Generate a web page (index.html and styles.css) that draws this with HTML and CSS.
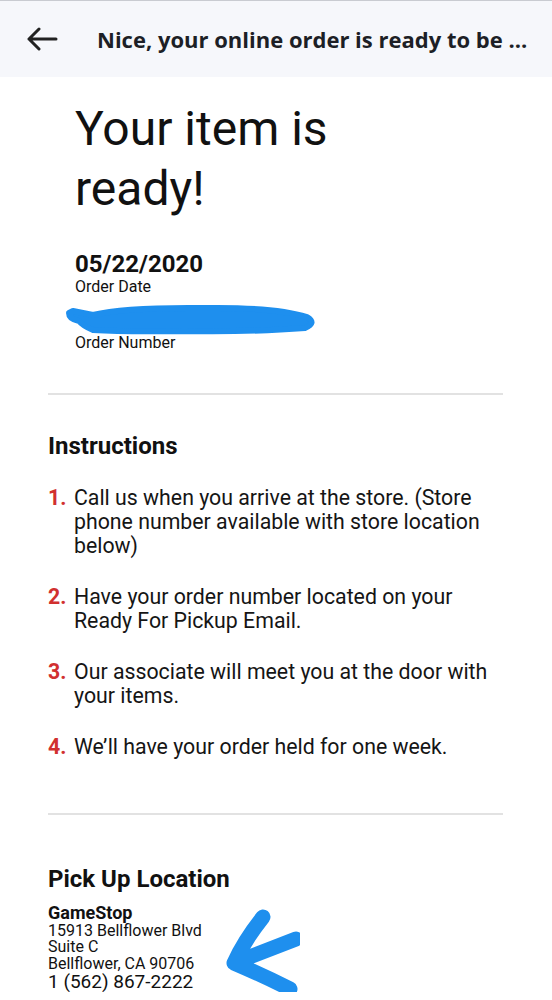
FILE: index.html
```html
<!DOCTYPE html>
<html lang="en">
<head>
    <meta charset="UTF-8">
    <meta name="viewport" content="width=device-width, initial-scale=1.0">
    <title>Your item is ready</title>
    <link rel="stylesheet" href="styles.css">
</head>
<body>

<header class="topbar">
    <button class="back" aria-label="Back">
        <svg width="32" height="24" viewBox="0 0 32 24">
            <path d="M30 12H3 M13 2L3 12L13 22" fill="none" stroke="#222" stroke-width="3" stroke-linecap="round" stroke-linejoin="round"/>
        </svg>
    </button>
    <div class="topbar-title">Nice, your online order is ready to be ...</div>
</header>

<main class="mail">
    <section class="hero">
        <h1>Your item is ready!</h1>
        <div class="order-date">05/22/2020</div>
        <div class="label">Order Date</div>
        <div class="order-number">
            <!-- redacted by hand -->
            <svg width="260" height="34" viewBox="0 0 260 34">
                <path d="M8 10 L28 14 Q60 6 140 7 Q210 6 242 16 Q252 22 240 27 Q190 31 120 30 Q60 31 28 29 Q18 25 14 20 Q4 18 4 12 Z" fill="#1e8fee" stroke="#1e8fee" stroke-width="6" stroke-linejoin="round"/>
            </svg>
        </div>
        <div class="label">Order Number</div>
    </section>

    <hr class="divider">

    <section class="block">
        <h2>Instructions</h2>
        <ol class="steps">
            <li><span class="num">1.</span><span>Call us when you arrive at the store. (Store phone number available with store location below)</span></li>
            <li><span class="num">2.</span><span>Have your order number located on your Ready For Pickup Email.</span></li>
            <li><span class="num">3.</span><span>Our associate will meet you at the door with your items.</span></li>
            <li><span class="num">4.</span><span>We’ll have your order held for one week.</span></li>
        </ol>
    </section>

    <hr class="divider">

    <section class="block location">
        <h2>Pick Up Location</h2>
        <address class="store">
            <strong>GameStop</strong><br>
            15913 Bellflower Blvd<br>
            Suite C<br>
            Bellflower, CA 90706
        </address>
        <div class="phone">1 (562) 867-2222</div>
        <svg class="scribble" width="90" height="100" viewBox="0 0 90 100">
            <path d="M53 14 Q34 38 24 60 L86 36 M24 60 Q52 72 80 86" fill="none" stroke="#1e8fee" stroke-width="15" stroke-linecap="round" stroke-linejoin="round"/>
        </svg>
    </section>
</main>

</body>
</html>
```

FILE: styles.css
```css
body {
    margin: 0;
    background: #fff;
    font-family: Roboto, "Liberation Sans", sans-serif;
    color: #111;
    overflow: hidden;
}
.topbar {
    display: flex;
    align-items: center;
    height: 76px;
    background: #f6f7fb;
    border-top: 1px solid #c9cbd1;
}
.back {
    background: none;
    border: none;
    padding: 0;
    margin: 0 39px 0 26px;
    width: 32px;
    height: 24px;
}
.topbar-title {
    font-family: "Open Sans", sans-serif;
    font-weight: 700;
    font-size: 22px;
    color: #1d1f26;
    white-space: nowrap;
}
.mail {
    padding: 0 49px 0 48px;
}
.hero {
    padding: 22px 0 40px 27px;
}
.hero h1 {
    margin: 0;
    width: 300px;
    font-size: 48px;
    font-weight: 400;
    line-height: 60px;
    color: #111;
}
.order-date {
    margin-top: 32px;
    font-size: 24px;
    font-weight: 700;
    line-height: 26px;
}
.label {
    font-size: 16px;
    line-height: 20px;
}
.order-number {
    height: 36px;
    margin-left: -10px;
    padding-top: 4px;
    box-sizing: border-box;
}
.divider {
    border: none;
    border-top: 2px solid #e2e2e2;
    margin: 0;
}
.block {
    padding-top: 37px;
}
.block h2 {
    margin: 0;
    font-size: 24px;
    font-weight: 700;
    line-height: 28px;
}
.steps {
    list-style: none;
    margin: 0;
    padding: 26px 0 54px;
    display: flex;
    flex-direction: column;
    gap: 27px;
}
.steps li {
    display: flex;
    font-size: 21.3px;
    line-height: 24px;
    color: #151515;
}
.num {
    flex: 0 0 26px;
    color: #d1302f;
    font-weight: 700;
}
.location {
    position: relative;
    padding-top: 50px;
}
.location h2 {
    margin-bottom: 12px;
}
.store {
    font-style: normal;
    font-size: 16px;
    line-height: 16.5px;
}
.store strong {
    font-size: 18px;
}
.phone {
    font-size: 19px;
    line-height: 20px;
}
.scribble {
    position: absolute;
    left: 162px;
    top: 88px;
}
```
